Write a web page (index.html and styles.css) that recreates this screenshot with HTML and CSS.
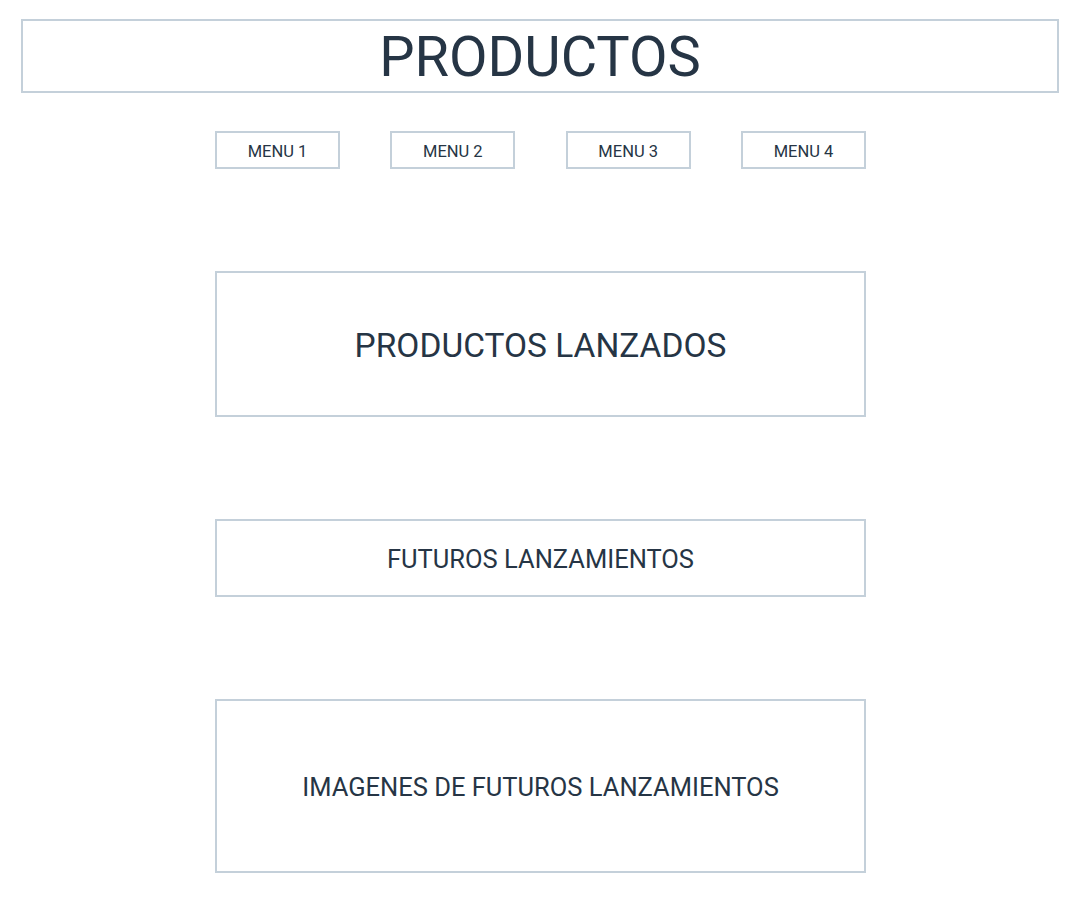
FILE: index.html
```html
<!DOCTYPE html>
<html lang="es">
<head>
<meta charset="utf-8">
<title>Productos</title>
<link rel="stylesheet" href="styles.css">
</head>
<body>
<div class="page">
  <header class="header"><h1 class="title">PRODUCTOS</h1></header>
  <nav class="nav">
    <a class="menu">MENU 1</a>
    <a class="menu">MENU 2</a>
    <a class="menu">MENU 3</a>
    <a class="menu">MENU 4</a>
  </nav>
  <main class="sections">
    <section class="box box-lg"><h2 class="box-title">PRODUCTOS LANZADOS</h2></section>
    <section class="box box-sm"><h2 class="box-title box-title-sm">FUTUROS LANZAMIENTOS</h2></section>
    <section class="box box-xl"><h2 class="box-title box-title-sm">IMAGENES DE FUTUROS LANZAMIENTOS</h2></section>
  </main>
</div>
</body>
</html>
```
FILE: styles.css
```css
* { box-sizing: border-box; }
html, body { margin: 0; padding: 0; background: #ffffff; }
body {
  font-family: Roboto, "Liberation Sans", sans-serif;
  color: #263545;
}
.page {
  padding: 19px 21px 0 21px;
  width: 1080px;
}
.header {
  width: 1038px;
  height: 74px;
  padding-top: 2px;
  border: 2px solid #c4d0da;
  display: flex;
  align-items: center;
  justify-content: center;
}
.title {
  margin: 0;
  font-weight: 400;
  font-size: 56px;
  line-height: 1;
}
.nav {
  margin: 38px 0 0 194px;
  width: 651px;
  display: flex;
  justify-content: space-between;
}
.menu {
  width: 125px;
  height: 38px;
  padding-top: 2px;
  border: 2px solid #c4d0da;
  display: flex;
  align-items: center;
  justify-content: center;
  font-size: 16.5px;
}
.sections {
  display: flex;
  flex-direction: column;
  gap: 102px;
  margin: 102px 0 0 194px;
  width: 651px;
}
.box {
  width: 651px;
  padding-top: 4px;
  border: 2px solid #c4d0da;
  display: flex;
  align-items: center;
  justify-content: center;
}
.box-lg { height: 146px; }
.box-sm { height: 78px; }
.box-xl { height: 174px; }
.box-title {
  margin: 0;
  font-weight: 400;
  font-size: 33.5px;
  line-height: 1;
}
.box-title-sm { font-size: 25.5px; }
```
